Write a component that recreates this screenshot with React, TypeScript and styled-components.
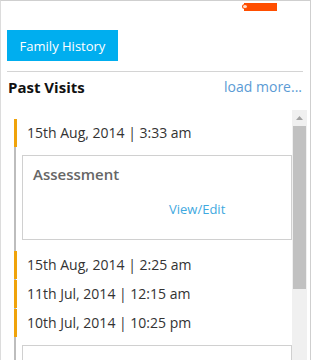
import styled, { createGlobalStyle } from "styled-components";

const GlobalStyle = createGlobalStyle`
  html, body {
    margin: 0;
    padding: 0;
    background: #ffffff;
  }
  body {
    font-family: "Open Sans", "Noto Sans", sans-serif;
  }
`;

interface Visit {
  date: string;
  card?: "full" | "empty";
}

// last card is only partly in view, its body is below the fold
const visits: Visit[] = [
  { date: "15th Aug, 2014 | 3:33 am", card: "full" },
  { date: "15th Aug, 2014 | 2:25 am" },
  { date: "11th Jul, 2014 | 12:15 am" },
  { date: "10th Jul, 2014 | 10:25 pm", card: "empty" },
];

const App = () => {
  return (
    <>
      <GlobalStyle />
      <Panel>
        <TopBar>
          <Ribbon>
            <RibbonDot />
          </Ribbon>
        </TopBar>
        <ActionButton>Family History</ActionButton>
        <Divider />
        <SectionHeader>
          <SectionTitle>Past Visits</SectionTitle>
          <LoadMore>load more...</LoadMore>
        </SectionHeader>
        <ScrollArea>
          <Timeline>
            {visits.map((v, i) => (
              <VisitBlock key={i} $expanded={!!v.card}>
                <DateRow>{v.date}</DateRow>
                {v.card && (
                  <Card>
                    {v.card === "full" && (
                      <>
                        <CardTitle>Assessment</CardTitle>
                        <CardLink>View/Edit</CardLink>
                      </>
                    )}
                  </Card>
                )}
              </VisitBlock>
            ))}
          </Timeline>
          <ScrollBar>
            <ScrollArrow>
              <svg width="7" height="4" viewBox="0 0 7 4">
                <polygon points="0,4 3.5,0 7,4" fill="#a3a3a3" />
              </svg>
            </ScrollArrow>
            <ScrollThumb />
          </ScrollBar>
        </ScrollArea>
      </Panel>
    </>
  );
};

export default App;

const Panel = styled.div`
  width: 311px;
  height: 360px;
  box-sizing: border-box;
  border-top: 1px solid #cfcfcf;
  border-left: 1px solid #dcdcdc;
  border-right: 1px solid #cfcfcf;
  overflow: hidden;
  display: flex;
  flex-direction: column;
`;

const TopBar = styled.div`
  height: 29px;
  display: flex;
  align-items: flex-start;
  padding-left: 243px;
  padding-top: 2px;
  box-sizing: border-box;
`;

const Ribbon = styled.div`
  width: 33px;
  height: 8px;
  background: #ff4e00;
  position: relative;
`;

const RibbonDot = styled.div`
  position: absolute;
  left: -2px;
  top: 1px;
  width: 6px;
  height: 5px;
  border-radius: 50%;
  border: 1px solid #ff4e00;
  background: #ffe0d0;
  box-sizing: border-box;
`;

const ActionButton = styled.button`
  margin-left: 6px;
  width: 111px;
  height: 31px;
  border: none;
  background: #00aeef;
  color: #ffffff;
  font-family: "Open Sans", "Noto Sans", sans-serif;
  font-size: 13px;
  padding: 0;
  cursor: pointer;
`;

const Divider = styled.div`
  margin: 10px 7px 0 6px;
  height: 0;
  border-top: 1px solid #d4d4d4;
`;

const SectionHeader = styled.div`
  display: flex;
  justify-content: space-between;
  align-items: center;
  height: 29px;
  padding: 0 8px 0 7px;
`;

const SectionTitle = styled.div`
  font-size: 15px;
  font-weight: 700;
  color: #111111;
`;

const LoadMore = styled.a`
  font-size: 14px;
  color: #5b9bd5;
  cursor: pointer;
`;

const ScrollArea = styled.div`
  margin-top: 9px;
  flex: 1;
  display: flex;
  padding-right: 3px;
  min-height: 0;
`;

const Timeline = styled.div`
  width: 291px;
  padding-left: 13px;
  padding-top: 9px;
  box-sizing: border-box;
`;

const VisitBlock = styled.div<{ $expanded: boolean }>`
  border-left: 2px solid #bdbdbd;
  padding-bottom: ${({ $expanded }) => ($expanded ? "11px" : "1px")};
`;

const DateRow = styled.div`
  margin-left: -2px;
  border-left: 3px solid #f0a30a;
  height: 28px;
  line-height: 28px;
  padding-left: 10px;
  font-size: 14px;
  color: #333333;
`;

const Card = styled.div`
  margin: 8px 0 0 6px;
  height: 85px;
  border: 1px solid #d0d0d0;
  box-sizing: border-box;
  padding: 8px 0 0 10px;
  display: flex;
  flex-direction: column;
`;

const CardTitle = styled.div`
  font-size: 15px;
  font-weight: 600;
  color: #666666;
`;

const CardLink = styled.a`
  margin-top: 16px;
  margin-left: 136px;
  font-size: 13px;
  color: #3fa9e0;
  cursor: pointer;
`;

const ScrollBar = styled.div`
  width: 15px;
  background: #f0f0f0;
  display: flex;
  flex-direction: column;
`;

const ScrollArrow = styled.div`
  height: 16px;
  display: flex;
  align-items: center;
  justify-content: center;
`;

const ScrollThumb = styled.div`
  margin: 0 1px;
  height: 163px;
  background: #c1c1c1;
`;
